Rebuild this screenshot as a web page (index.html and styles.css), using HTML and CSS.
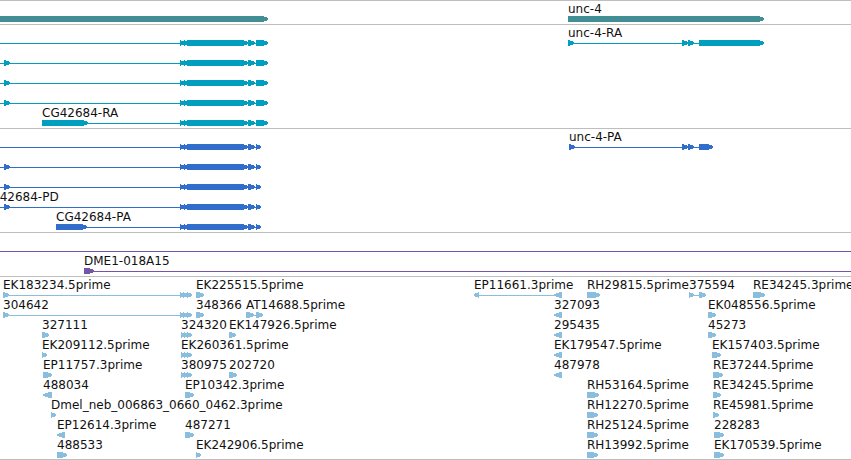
FILE: index.html
```html
<!DOCTYPE html>
<html lang="en">
<head>
  <meta charset="UTF-8">
  <title>Genome browser - unc-4 region</title>
  <link rel="stylesheet" href="styles.css">
</head>
<body>

<main class="browser">
  <section class="track gene" id="genes" aria-label="Genes"></section>
  <section class="track transcript" id="transcripts" aria-label="Transcripts"></section>
  <section class="track protein" id="proteins" aria-label="Proteins"></section>
  <section class="track clone" id="clones" aria-label="Clones"></section>
  <section class="track est" id="ests" aria-label="ESTs"></section>
</main>

<script src="tracks.js"></script>
</body>
</html>
```
FILE: styles.css
```css
body {
  margin: 0;
  background: #fff;
  color: #000;
  font-family: "DejaVu Sans", sans-serif;
  font-size: 12px;
}

.browser {
  overflow: hidden;
  border-bottom: 1px solid #bebebe;
}

.track {
  border-top: 1px solid #bebebe;
  padding: 1px 0 2px;
}

.track:last-child {
  padding-bottom: 1px;
}

.row {
  display: block;
  width: 100%;
  height: 20px;
}

.label {
  fill: #111;
}

.glyph {
  fill: currentColor;
  shape-rendering: crispEdges;
}

.gene .glyph {
  color: #418e95;
}

.transcript .glyph {
  color: #009fbf;
}

.protein .glyph {
  color: #316dca;
}

.clone .glyph {
  color: #7555a5;
}

.est .glyph {
  color: #89bedf;
}
```
FILE: tracks.js
```js
const NS = "http://www.w3.org/2000/svg";
const END = 10000; // runs past the right edge of the view

// feature: [label, start, end, blocks, strand]
const geneEnd = [[180, 185], [184, 189], [187, 248], [248, 255], [256, 268]];
const cdsEnd = [[180, 185], [184, 189], [187, 248], [248, 255], [256, 261]];
const triple = [[181, 186], [184, 189], [187, 192]];

const tracks = {
  genes: [
    [["", -20, 268, [[-20, 268]]], ["unc-4", 568, 764, [[568, 764]]]]
  ],
  transcripts: [
    [["", -20, 268, geneEnd],
     ["unc-4-RA", 568, 764, [[568, 574], [682, 688], [688, 694], [699, 764]]]],
    [["", -20, 268, [[4, 10], ...geneEnd]]],
    [["", -20, 268, [[4, 10], ...geneEnd]]],
    [["", -20, 268, [[4, 10], ...geneEnd]]],
    [["CG42684-RA", 42, 268, [[42, 88], ...geneEnd]]]
  ],
  proteins: [
    [["", -20, 261, cdsEnd],
     ["unc-4-PA", 569, 713, [[569, 575], [682, 688], [688, 694], [699, 713]]]],
    [["", -20, 261, [[4, 10], ...cdsEnd]]],
    [["", -20, 261, [[4, 10], ...cdsEnd]]],
    [["CG42684-PD", -18, 261, [[4, 10], ...cdsEnd]]],
    [["CG42684-PA", 56, 261, [[56, 87], ...cdsEnd]]]
  ],
  clones: [
    [["", -20, END, []]],
    [["DME1-018A15", 84, END, [[84, 94]]]]
  ],
  ests: [
    [["EK183234.5prime", 3, 192, [[3, 9], [180, 185], [183, 188], [187, 192]]],
     ["EK225515.5prime", 196, 204, [[196, 204]]],
     ["EP11661.3prime", 474, 562, [[474, 479], [554, 562]], -1],
     ["RH29815.5prime", 587, 600, [[587, 600]]],
     ["375594", 689, 706, [[689, 694], [699, 706]]],
     ["RE34245.3prime", 753, 765, [[753, 765]]]],
    [["304642", 3, 192, [[3, 9], [180, 185], [183, 188], [187, 192]]],
     ["348366", 196, 204, [[196, 204]]],
     ["AT14688.5prime", 246, 263, [[246, 254], [256, 263]]],
     ["327093", 554, 562, [[554, 562]], -1],
     ["EK048556.5prime", 708, 716, [[708, 716]]]],
    [["327111", 42, 49, [[42, 49]]],
     ["324320", 181, 192, triple],
     ["EK147926.5prime", 229, 236, [[229, 236]]],
     ["295435", 554, 562, [[554, 562]], -1],
     ["45273", 708, 716, [[708, 716]]]],
    [["EK209112.5prime", 42, 47, [[42, 47]]],
     ["EK260361.5prime", 181, 192, triple],
     ["EK179547.5prime", 554, 562, [[554, 562]], -1],
     ["EK157403.5prime", 712, 721, [[712, 721]]]],
    [["EP11757.3prime", 43, 52, [[43, 52]]],
     ["380975", 181, 192, triple],
     ["202720", 229, 237, [[229, 237]]],
     ["487978", 554, 562, [[554, 562]], -1],
     ["RE37244.5prime", 713, 723, [[713, 723]]]],
    [["488034", 43, 52, [[43, 52]], -1],
     ["EP10342.3prime", 185, 194, [[185, 194]]],
     ["RH53164.5prime", 587, 599, [[587, 599]]],
     ["RE34245.5prime", 713, 721, [[713, 721]]]],
    [["Dmel_neb_006863_0660_0462.3prime", 51, 56, [[51, 56]]],
     ["RH12270.5prime", 587, 598, [[587, 598]]],
     ["RE45981.5prime", 713, 719, [[713, 719]]]],
    [["EP12614.3prime", 57, 65, [[57, 65]], -1],
     ["487271", 185, 194, [[185, 194]]],
     ["RH25124.5prime", 587, 598, [[587, 598]]],
     ["228283", 714, 724, [[714, 724]]]],
    [["488533", 57, 67, [[57, 67]]],
     ["EK242906.5prime", 196, 201, [[196, 201]]],
     ["RH13992.5prime", 587, 598, [[587, 598]]],
     ["EK170539.5prime", 714, 724, [[714, 724]]]]
  ]
};

function add(parent, name, attrs) {
  const el = document.createElementNS(NS, name);
  for (const key in attrs) el.setAttribute(key, attrs[key]);
  parent.appendChild(el);
  return el;
}

// block with an arrow head on its 3' side, always drawn clockwise
function blockPath(start, end, strand) {
  const head = Math.min(6, end - start);
  if (strand === -1) {
    return `M${end} 14V20H${start + head}L${start} 18V16L${start + head} 14Z`;
  }
  return `M${start} 14H${end - head}L${end} 16V18L${end - head} 20H${start}Z`;
}

function drawFeature(svg, [label, start, end, blocks, strand]) {
  let d = `M${start} 17H${end}V18H${start}Z`;
  blocks.forEach(b => d += blockPath(b[0], b[1], strand));
  add(svg, "path", { class: "glyph", d: d });
  if (label) {
    add(svg, "text", { class: "label", x: start, y: 11 }).textContent = label;
  }
}

for (const id in tracks) {
  const section = document.getElementById(id);
  tracks[id].forEach(features => {
    const svg = add(section, "svg", { class: "row" });
    features.forEach(f => drawFeature(svg, f));
  });
}
```
